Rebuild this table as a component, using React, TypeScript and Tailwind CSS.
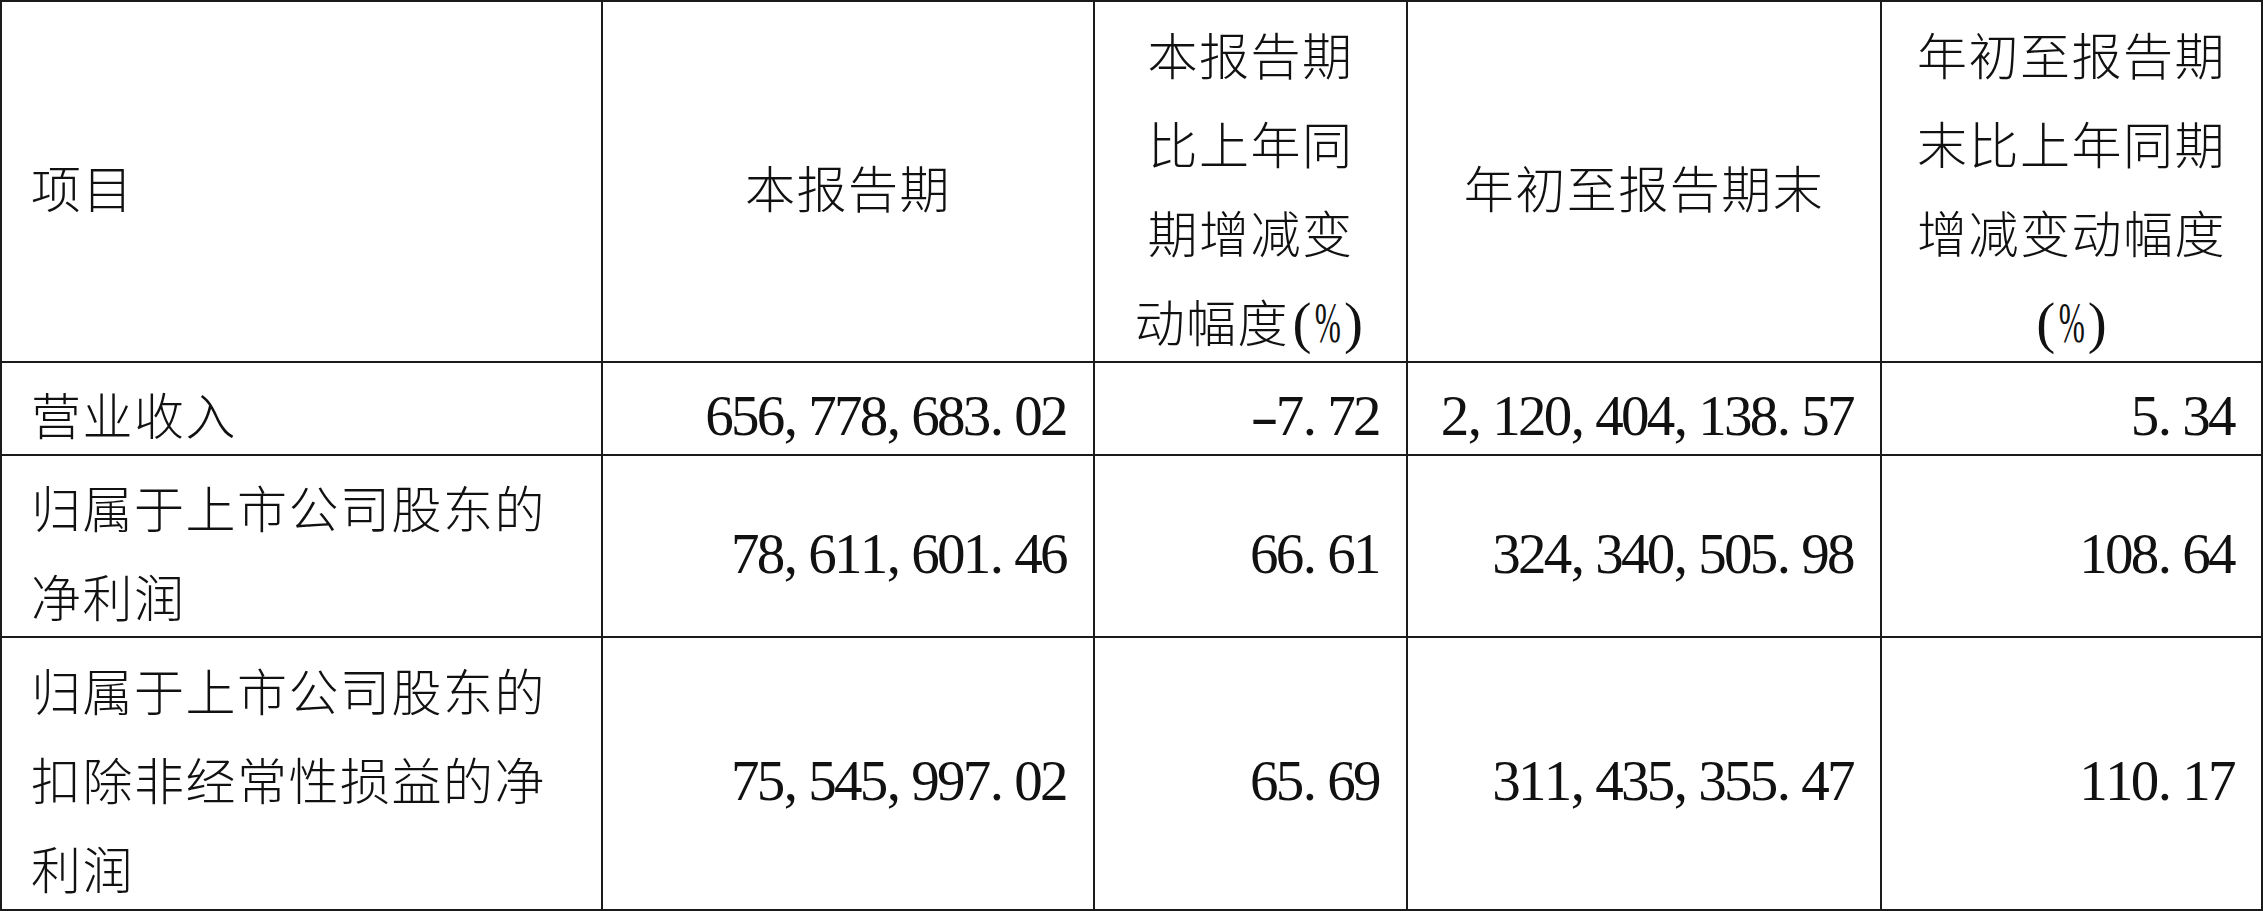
import React from 'react';

// half-width glyphs (digits, punctuation) sit in fixed cells like the Song face in the source
function Half({ text }: { text: string }) {
  return (
    <span className="font-['Liberation_Serif',serif] text-[57px] leading-none tracking-normal">
      {[...text].map((c, i) => {
        if (c === ',' || c === '.') {
          return (
            <span key={i} className="inline-flex w-[25.75px] justify-start">
              {c}
            </span>
          );
        }
        if (c === '%') {
          return (
            <span key={i} className="inline-flex w-[25.75px] justify-center">
              <span className="inline-block scale-x-[0.55]">%</span>
            </span>
          );
        }
        if (c === '-') {
          return (
            <span key={i} className="inline-flex w-[25.75px] justify-center">
              <span className="inline-block scale-x-[1.5]">-</span>
            </span>
          );
        }
        return (
          <span key={i} className="inline-flex w-[25.75px] justify-center">
            {c}
          </span>
        );
      })}
    </span>
  );
}

const cell = 'flex flex-col justify-center border-r-2 border-b-2 border-[#1a1a1a] pt-[10px]';
const left = cell + ' items-start pl-[29px]';
const center = cell + ' items-center text-center';
const right = cell + ' items-end pr-[26px]';

const rows = [
  {
    label: <>营业收入</>,
    values: ['656,778,683.02', '-7.72', '2,120,404,138.57', '5.34'],
  },
  {
    label: (
      <>
        归属于上市公司股东的
        <br />
        净利润
      </>
    ),
    values: ['78,611,601.46', '66.61', '324,340,505.98', '108.64'],
  },
  {
    label: (
      <>
        归属于上市公司股东的
        <br />
        扣除非经常性损益的净
        <br />
        利润
      </>
    ),
    values: ['75,545,997.02', '65.69', '311,435,355.47', '110.17'],
  },
];

export default function App() {
  return (
    <div className="w-[2263px] h-[911px] bg-white">
      <div className="grid grid-cols-[601px_492px_313px_474px_381px] grid-rows-[361px_93px_182px_273px] border-l-2 border-t-2 border-[#1a1a1a] bg-white font-['Noto_Sans_CJK_SC',sans-serif] font-light text-[50px] leading-[89px] tracking-[1.5px] text-[#111]">
        <div className={left}>
          <div>项目</div>
        </div>
        <div className={center}>
          <div>本报告期</div>
        </div>
        <div className={center}>
          <div>
            本报告期
            <br />
            比上年同
            <br />
            期增减变
            <br />
            动幅度<Half text="(%)" />
          </div>
        </div>
        <div className={center}>
          <div>年初至报告期末</div>
        </div>
        <div className={center}>
          <div>
            年初至报告期
            <br />
            末比上年同期
            <br />
            增减变动幅度
            <br />
            <Half text="(%)" />
          </div>
        </div>

        {rows.map((r, i) => (
          <React.Fragment key={i}>
            <div className={left}>
              <div>{r.label}</div>
            </div>
            {r.values.map((v, j) => (
              <div key={j} className={right}>
                <div>
                  <Half text={v} />
                </div>
              </div>
            ))}
          </React.Fragment>
        ))}
      </div>
    </div>
  );
}
